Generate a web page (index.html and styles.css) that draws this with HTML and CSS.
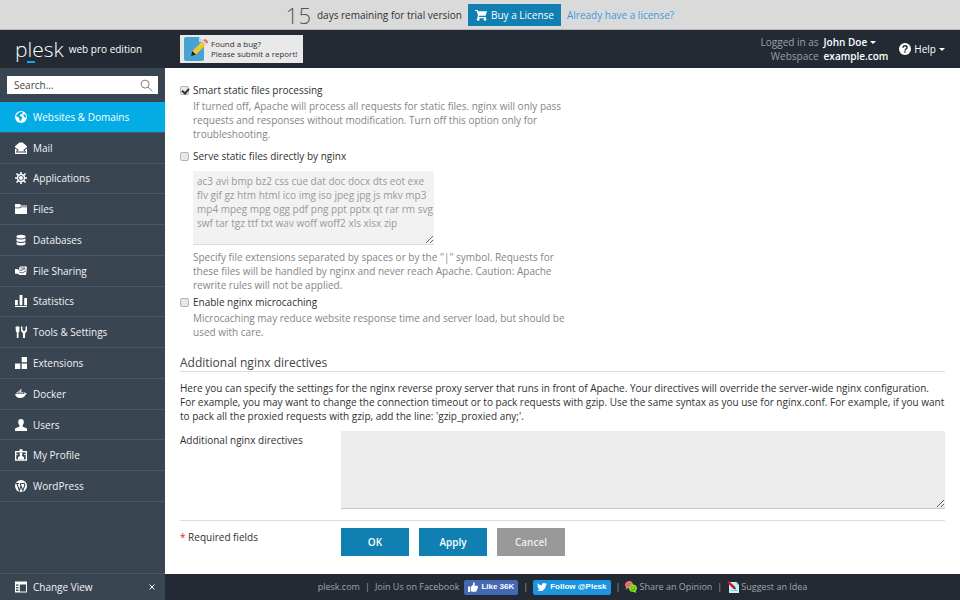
FILE: index.html
```html
<!DOCTYPE html>
<html lang="en">
<head>
<meta charset="utf-8">
<title>Plesk Web Pro Edition</title>
<link rel="stylesheet" href="styles.css">
</head>
<body>
<div class="trial">
  <span class="trial-days">15</span>
  <span class="trial-text">days remaining for trial version</span>
  <a class="buy" href="#"><svg class="icon" viewBox="0 0 12 12"><path d="M0 1h2.6l.5 1.2H12L10.600 6.700H4.300l-.4 1.200H11v1.300H2.200l.8-2.500L1.700 2H0z"/><circle cx="3.200" cy="10.400" r="1.400"/><circle cx="10" cy="10.400" r="1.400"/></svg>Buy a License</a>
  <a class="trial-link" href="#">Already have a license?</a>
</div>
<header class="header">
  <a class="brand" href="#"><span class="logo">p<span class="logo-l">l</span>esk</span><span class="edition">web pro edition</span></a>
  <a class="bug" href="#">
    <svg class="bug-icon" viewBox="0 0 24 24"><path fill="#48a3d3" d="M2 0h13l5 5v17a2 2 0 0 1-2 2H2a2 2 0 0 1-2-2V2a2 2 0 0 1 2-2z"/><path fill="#b9e0f2" d="M15 0l5 5h-5z"/><path fill="#222" d="M7 19l1.500-5 3.500 3.500z"/><path fill="#f9c828" d="M8.500 14L18 4.500 21.500 8 12 17.500z"/><path fill="#ddd" d="M18 4.500l1.300-1.300 3.500 3.500L21.500 8z"/><path fill="#e77474" d="M19.300 3.200l1-1q1-.7 2.700 1t.8 2.500l-1 1z"/></svg>
    <span>Found a bug?<br>Please submit a report!</span>
  </a>
  <div class="account">
    <span class="muted">Logged in as</span><button class="account-button user" type="button">John Doe<span class="caret"></span></button>
    <span class="muted">Webspace</span><a class="site" href="#">example.com</a>
  </div>
  <button class="account-button help" type="button"><svg class="help-icon" viewBox="0 0 12 12"><circle cx="6" cy="6" r="6" fill="#fff"/><path d="M4 4.700Q4 2.800 6 2.800T8 4.500Q8 5.400 7 6T6 7.400M6 8.300V9.700" fill="none" stroke="#232a33" stroke-width="1.400"/></svg>Help<span class="caret"></span></button>
</header>
<div class="body">
  <aside class="sidebar">
    <form class="search" role="search">
      <input class="search-input" type="text" placeholder="Search..." aria-label="Search">
      <button class="search-button" type="button" aria-label="Find"><svg viewBox="0 0 14 14"><circle cx="5.500" cy="5.500" r="4.300"/><path d="M8.600 8.600L13.300 13.300"/></svg></button>
    </form>
    <nav class="nav">
      <a class="nav-item active" href="#"><svg class="icon" viewBox="0 0 12 12"><circle cx="6" cy="6" r="6"/><path fill="#04ace6" d="M4.200 1.600L6.500.8 8 2 6.800 3.200 5.200 3.300 4.500 5 6.300 5.400 7.600 7 6.200 8.600 5.500 10.600 4.400 9 4.300 7.200 2.300 5.600 1 5.200 1.800 3.400zM8.500 3l2 .8.700 2.500-1.200.3L8.500 5z"/></svg>Websites &amp; Domains</a>
      <a class="nav-item" href="#"><svg class="icon" viewBox="0 0 12 12"><path d="M0 4.200L4.500.5h3L12 4.200V12H0z"/><path fill="#394551" d="M0 5.300l3.800 2.600L2 9.400h8L8.200 7.900 12 5.300v1.200L9.700 8l1.800 2.400H.5L2.300 8 0 6.500z"/></svg>Mail</a>
      <a class="nav-item" href="#"><svg class="icon" viewBox="0 0 12 12"><path stroke="#fff" stroke-width="1.600" d="M6 0V12M0 6H12M1.500 1.500L10.500 10.500M10.500 1.500L1.500 10.500"/><circle cx="6" cy="6" r="4.200"/><circle cx="6" cy="6" r="2.500" fill="none" stroke="#394551" stroke-width=".9"/></svg>Applications</a>
      <a class="nav-item" href="#"><svg class="icon" viewBox="0 0 12 12"><path d="M0 1h5l1 1.500h6v1H5.500l-1 1H0z"/><path d="M0 5.300h5l1-1h6V11H0z"/></svg>Files</a>
      <a class="nav-item" href="#"><svg class="icon" viewBox="0 0 12 12"><path d="M1.500 2.300Q1.500.7 6 .7t4.500 1.600v.8Q10.500 4.400 6 4.400T1.500 3.100z"/><path d="M1.500 4.500Q3.500 5.500 6 5.500t4.500-1V6.500Q10.500 7.900 6 7.900T1.500 6.500z"/><path d="M1.500 8Q3.500 9 6 9t4.500-1v2Q10.500 11.400 6 11.400T1.500 10z"/></svg>Databases</a>
      <a class="nav-item" href="#"><svg class="icon" viewBox="0 0 12 12"><path d="M0 4h2.200l2 1V2.500l1-1h6.500V5L11 10H5L2.500 8.800H0z"/><path fill="none" stroke="#394551" stroke-width=".8" d="M4.300 5.300H7L8 4h2.500M4.500 7.400l3 .5L11 5.800M5.500 3H10"/></svg>File Sharing</a>
      <a class="nav-item" href="#"><svg class="icon" viewBox="0 0 12 12"><path d="M0 5h2.800v5.200H0zM4.600 0h2.800v10.200H4.600zM9.200 3H12v7.200H9.200zM0 11h12v1H0z"/></svg>Statistics</a>
      <a class="nav-item" href="#"><svg class="icon" viewBox="0 0 12 12"><path d="M.5 1Q2.500-.6 4.700 1L4.200 6H3.500V12H1.800V6H1z"/><path d="M6 .5h1.500V4L9 5.200 10.500 4V.5H12V5L10 7.500V12H8V7.500L6 5z"/></svg>Tools &amp; Settings</a>
      <a class="nav-item" href="#"><svg class="icon" viewBox="0 0 12 12"><path d="M6.700 0H12v5.200H6.700zM0 6.600h5.300V12H0zM6.700 6.600H12V12H6.700z"/></svg>Extensions</a>
      <a class="nav-item" href="#"><svg class="icon" viewBox="0 0 12 12"><path d="M0 6h9.300Q9 4.800 9.600 4l.9 1.200L12 5.500 10.600 6.700Q9 10 5 10 1 10 0 6z"/><path d="M1.500 4.200h1.400v1.400H1.500zM3.300 4.200h1.400v1.400H3.300zM5.100 4.200h1.400v1.400H5.100zM6.900 4.200h1.400v1.400H6.900zM3.300 2.700h3.200v1.100H3.300zM5.100 1.300h1.400v1.100H5.100z"/></svg>Docker</a>
      <a class="nav-item" href="#"><svg class="icon" viewBox="0 0 12 12"><path d="M3.200 3Q3.200 0 6 0t2.800 3Q8.800 5.200 7.500 6.300v1.200L12 9.500V12H0V9.500l4.500-2V6.300Q3.200 5.200 3.200 3z"/></svg>Users</a>
      <a class="nav-item" href="#"><svg class="icon" viewBox="0 0 12 12"><path d="M0 2h4.500V.3h3V2H12v9.700H0z"/><path fill="#394551" d="M1.300 3.400h9.400v7H1.300z"/><path d="M4.600 5Q4.600 3.200 6 3.200T7.400 5Q7.400 6.200 6.700 6.800L9 8.200v2.300H3V8.200l2.300-1.400Q4.600 6.200 4.600 5zM1.300 5h1.500v1H1.300zM9.200 5h1.500v1H9.200z"/></svg>My Profile</a>
      <a class="nav-item" href="#"><svg class="icon" viewBox="0 0 12 12"><circle cx="6" cy="6" r="6"/><path fill="none" stroke="#394551" stroke-width="1.100" d="M.8 3.500H4M5 3.500h3.500M2 3.800L4.400 10.500 6 6 5.200 3.800M6 6L7.800 10.500 9.800 5.500Q9.700 4 8.900 2.800"/></svg>WordPress</a>
    </nav>
    <div class="view">
      <button class="view-button" type="button"><svg class="icon" viewBox="0 0 12 12"><path d="M0 .5h12v11H0z"/><path fill="#394551" d="M4.800 3.500H11v7H4.800zM1 3.500h2.500v1.300H1zM1 6h2.500v1.300H1zM1 8.500h2.500v1.600H1z"/></svg>Change View</button>
      <button class="view-close" type="button" aria-label="Hide menu"><svg viewBox="0 0 6 6"><path d="M.5.5l5 5M5.500.5l-5 5"/></svg></button>
    </div>
  </aside>
  <div class="page">
    <main class="main">
      <form>
        <div class="option">
          <label class="check"><input class="box" type="checkbox" checked>Smart static files processing</label>
          <p class="hint">If turned off, Apache will process all requests for static files. nginx will only pass requests and responses without modification. Turn off this option only for troubleshooting.</p>
        </div>
        <div class="option serve">
          <label class="check"><input class="box" type="checkbox">Serve static files directly by nginx</label>
          <textarea class="extensions" disabled aria-label="File extensions">ac3 avi bmp bz2 css cue dat doc docx dts eot exe flv gif gz htm html ico img iso jpeg jpg js mkv mp3 mp4 mpeg mpg ogg pdf png ppt pptx qt rar rm svg swf tar tgz ttf txt wav woff woff2 xls xlsx zip</textarea>
          <p class="hint">Specify file extensions separated by spaces or by the "|" symbol. Requests for these files will be handled by nginx and never reach Apache. Caution: Apache rewrite rules will not be applied.</p>
        </div>
        <div class="option">
          <label class="check"><input class="box" type="checkbox">Enable nginx microcaching</label>
          <p class="hint">Microcaching may reduce website response time and server load, but should be used with care.</p>
        </div>
        <h2 class="section-title">Additional nginx directives</h2>
        <p class="section-text">Here you can specify the settings for the nginx reverse proxy server that runs in front of Apache. Your directives will override the server-wide nginx configuration. For example, you may want to change the connection timeout or to pack requests with gzip. Use the same syntax as you use for nginx.conf. For example, if you want to pack all the proxied requests with gzip, add the line: 'gzip_proxied any;'.</p>
        <div class="row">
          <label class="row-label" for="directives">Additional nginx directives</label>
          <textarea class="directives" id="directives"></textarea>
        </div>
        <div class="row actions">
          <span class="row-label"><span class="star">*</span> Required fields</span>
          <div class="buttons">
            <button class="button" type="button">OK</button>
            <button class="button" type="button">Apply</button>
            <button class="button cancel" type="button">Cancel</button>
          </div>
        </div>
      </form>
    </main>
    <footer class="footer">
      <a href="#">plesk.com</a><span>|</span><a href="#">Join Us on Facebook</a>
      <a class="social like" href="#"><svg class="social-icon" viewBox="0 0 10 10"><path d="M0 4.500h2.300V10H0zM3 4.700L5.200 2.500V.3Q7 0 6.800 2.200L6.500 3.800H9.500Q10.300 4.500 9.700 5.500 10 6.500 9.200 7.200 9.300 8.200 8.500 8.600 8.500 9.800 7.500 9.800H4.500L3 9.200z"/></svg>Like 36K</a>
      <span>|</span>
      <a class="social follow" href="#"><svg class="social-icon" viewBox="0 0 10 10"><path d="M0 8.200Q1.700 8.300 2.900 7.300 1.500 7 1 5.900h.9Q.4 5.300.4 3.800l.9.200Q-.1 2.800.7 1.300 2.500 3.300 4.900 3.400 4.600 1 6.900.9 7.800.9 8.400 1.500L9.700 1 9 2.100 10 1.900 9 2.900Q8.900 6.500 6.300 8.200 3.200 10 0 8.200z"/></svg>Follow @Plesk</a>
      <span>|</span>
      <a class="footer-link" href="#"><svg class="footer-icon" viewBox="0 0 12 12"><path fill="#ee7b76" d="M3.600.2A3.600 3.600 0 1 1 3 7L.8 8.800 1 6Q-.5 4.500.3 2.500 1.300.3 3.600.2z"/><path fill="none" stroke="#a13b3b" stroke-width=".7" d="M2.200 2.500v1M5 2v1M2.300 5Q3.300 4 4.500 4.500"/><path fill="#7be01c" d="M8 3.600q3.900.2 4 3.700-.1 1.900-1.300 2.800l.7 1.900-2.600-1Q4.200 11 4 7.500 4.200 3.800 8 3.600z"/><path fill="none" stroke="#377509" stroke-width=".7" d="M6.800 5.800v1M9.500 5.800v1M6.200 8.200Q8 10 10 8.200"/></svg>Share an Opinion</a>
      <span>|</span>
      <a class="footer-link" href="#"><svg class="footer-icon" viewBox="0 0 12 12"><path fill="#c9f0f7" d="M2 1h7.500L12 3.500V12H2z"/><path fill="#6fb7c9" d="M9.500 1L12 3.500H9.500zM3.500 9h7v.7h-7z"/><path fill="#dd1010" d="M0 1.200L1.600 0l6.400 5.500-2 2z"/><path fill="#222" d="M6 7.500l2-2 .8 3z"/></svg>Suggest an Idea</a>
    </footer>
  </div>
</div>
</body>
</html>
```

FILE: styles.css
```css
* {
  box-sizing: border-box;
}

body {
  margin: 0;
  min-height: 100vh;
  display: flex;
  flex-direction: column;
  background: #fff;
  color: #303030;
  font: 10px/14px "Open Sans", "Noto Sans", sans-serif;
}

a {
  color: inherit;
  text-decoration: none;
}

button,
input,
textarea {
  margin: 0;
  padding: 0;
  border: 0;
  border-radius: 0;
  color: inherit;
  font: inherit;
}

button {
  background: none;
  cursor: pointer;
}

.icon {
  flex: none;
  width: 12px;
  height: 12px;
  fill: #fff;
}

/* Trial banner */

.trial {
  display: flex;
  align-items: center;
  justify-content: center;
  height: 30px;
  background: #dadada;
  border-bottom: 1px solid #b4b7ba;
}

.trial-days {
  margin-right: 6px;
  color: #555;
  font-size: 22px;
  font-weight: 300;
}

.buy {
  display: flex;
  align-items: center;
  gap: 4px;
  height: 22px;
  margin: 0 6px;
  padding: 0 7px;
  background: #107fb2;
  color: #fff;
}

.trial-link {
  color: #3a9ae0;
}

/* Header */

.header {
  display: flex;
  align-items: center;
  height: 38px;
  padding: 0 15px;
  background: #232a33;
  color: #fff;
}

.brand {
  display: flex;
  align-items: center;
  gap: 5px;
  width: 165px;
}

.logo {
  font-size: 21px;
  font-weight: 300;
}

.logo-l {
  position: relative;
}

.logo-l::after {
  content: "";
  position: absolute;
  left: -1px;
  bottom: 0;
  width: 8px;
  height: 2px;
  background: #04ace6;
}

.bug {
  display: flex;
  align-items: center;
  gap: 3px;
  height: 28px;
  padding: 0 6px 0 4px;
  background: #e9e9e9;
  color: #333;
  font-size: 8px;
  line-height: 10px;
}

.bug-icon {
  width: 24px;
  height: 24px;
}

.account {
  display: grid;
  grid-template-columns: auto auto;
  column-gap: 5px;
  margin-left: auto;
  margin-right: 11px;
}

.muted {
  color: #9ba0a6;
  text-align: right;
}

.account-button {
  display: flex;
  align-items: center;
  gap: 3px;
}

.user {
  font-weight: 600;
}

.site {
  font-weight: 600;
}

.caret {
  border: 3px solid transparent;
  border-top-color: currentColor;
  border-bottom: 0;
}

.help-icon {
  width: 12px;
  height: 12px;
}

/* Sidebar */

.body {
  display: flex;
  flex: 1;
}

.sidebar {
  display: flex;
  flex: none;
  flex-direction: column;
  width: 165px;
  background: #394551;
  color: #f1f3f4;
}

.search {
  display: flex;
  align-items: center;
  height: 18px;
  margin: 8px 7px;
  padding: 0 5px 0 7px;
  background: #fff;
  color: #333;
}

.search-input {
  flex: 1;
  min-width: 0;
  background: none;
}

.search-input::placeholder {
  color: #444;
}

.search-button svg {
  display: block;
  width: 13px;
  height: 13px;
  fill: none;
  stroke: #777;
}

.nav {
  display: grid;
  grid-auto-rows: 1fr;
  min-height: 400px;
}

.nav-item {
  display: flex;
  align-items: center;
  gap: 6px;
  padding: 0 15px;
  border-bottom: 1px solid #4a5967;
}

.active {
  background: #04ace6;
  color: #fff;
}

.view {
  display: flex;
  align-items: center;
  justify-content: space-between;
  height: 27px;
  margin-top: auto;
  padding: 0 10px 0 15px;
  border-top: 1px solid #4a5967;
}

.view-button {
  display: flex;
  align-items: center;
  gap: 6px;
}

.view-close svg {
  display: block;
  width: 6px;
  height: 6px;
  stroke: #fff;
}

/* Content */

.page {
  display: flex;
  flex: 1;
  flex-direction: column;
  min-width: 0;
}

.main {
  flex: 1;
  padding: 15px;
}

.option {
  margin-bottom: 8px;
}

.serve {
  margin-bottom: 3px;
}

.check {
  display: flex;
  align-items: center;
  gap: 4px;
}

.box {
  position: relative;
  width: 9px;
  height: 9px;
  appearance: none;
  background: #e8e8e8;
  border: 1px solid #b4b4b4;
  border-radius: 2px;
}

.box:checked::after {
  content: "";
  position: absolute;
  left: 2px;
  top: 0;
  width: 3px;
  height: 5px;
  border: solid #333;
  border-width: 0 2px 2px 0;
  transform: rotate(40deg);
}

.hint {
  max-width: 380px;
  margin: 2px 0 0 13px;
  color: #858585;
}

.extensions {
  display: block;
  width: 241px;
  height: 74px;
  margin: 8px 0 5px 13px;
  padding: 3px 0 3px 4px;
  background: #f2f2f2;
  border-bottom: 1px solid #dcdcdc;
  color: #999;
  resize: both;
}

.section-title {
  margin: 16px 0 9px;
  border-bottom: 1px solid #ddd;
  color: #444;
  font-size: 12px;
  font-weight: 400;
  line-height: 16px;
}

.section-text {
  margin: 0 0 8px;
}

.row {
  display: flex;
  align-items: flex-start;
}

.row-label {
  flex: none;
  width: 161px;
  padding-top: 2px;
}

.directives {
  flex: 1;
  height: 78px;
  padding: 3px 5px;
  background: #ececec;
  border-bottom: 1px solid #c3cacf;
  resize: vertical;
}

.actions {
  margin-top: 11px;
  padding-top: 7px;
  border-top: 1px solid #ddd;
}

.star {
  color: #d22;
}

.buttons {
  display: flex;
  gap: 10px;
}

.button {
  width: 68px;
  height: 28px;
  background: #107fb2;
  color: #fff;
  font-weight: 600;
}

.cancel {
  background: #999;
  color: #eee;
}

/* Footer */

.footer {
  display: flex;
  align-items: center;
  justify-content: center;
  gap: 5px;
  height: 26px;
  background: #232a33;
  color: #a0a4a9;
  font-size: 9px;
}

.social {
  display: flex;
  align-items: center;
  gap: 3px;
  height: 15px;
  padding: 0 4px;
  border-radius: 2px;
  color: #fff;
  font: 600 8px/14px "Liberation Sans", sans-serif;
}

.social-icon {
  width: 10px;
  height: 10px;
  fill: #fff;
}

.like {
  background: #4468b3;
}

.follow {
  background: #1b95e0;
}

.footer-link {
  display: flex;
  align-items: center;
  gap: 2px;
}

.footer-icon {
  width: 12px;
  height: 12px;
}
```
